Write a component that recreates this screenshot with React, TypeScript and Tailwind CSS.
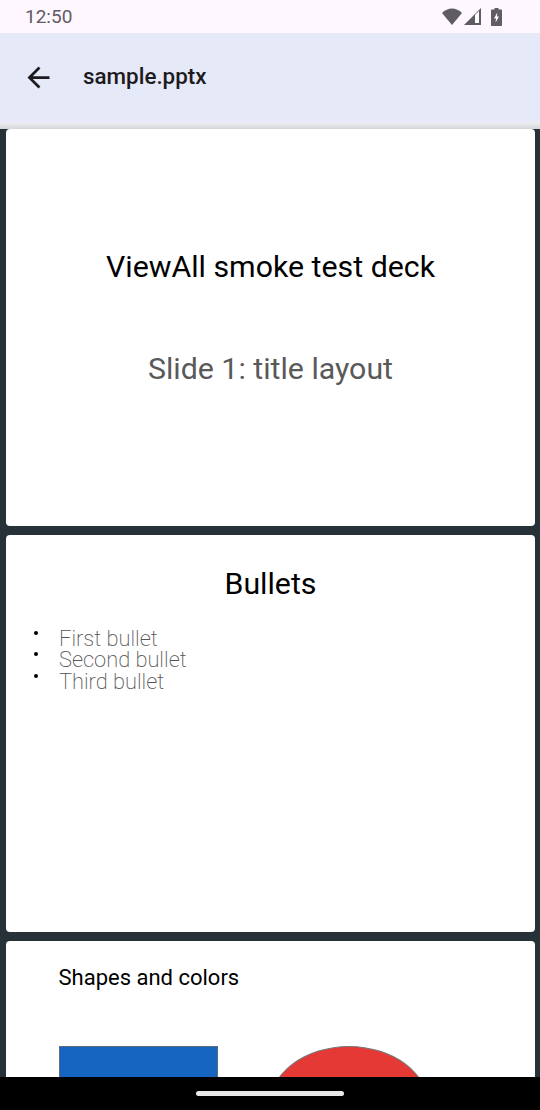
const BULLETS = ['First bullet', 'Second bullet', 'Third bullet']

function StatusIcons() {
  return (
    <div className="flex items-center">
      <svg width="20" height="17" viewBox="0 0 20 17" className="fill-[#5f5c63]">
        <path d="M0 5 C5.5 -1 14.5 -1 20 5 L10 17 Z" />
      </svg>
      <svg width="17" height="17" viewBox="0 0 17 17" className="ml-[2px]">
        <path d="M0 17 L17 0 V17 Z" fill="#5f5c63" />
        <path d="M11 7 L15 3 V15 H11 Z" fill="#fff" />
      </svg>
      <svg width="11" height="18" viewBox="0 0 11 18" className="ml-[10px] fill-[#5f5c63]">
        <path d="M3.5 0 H7.5 V1.5 H10 C10.6 1.5 11 1.9 11 2.5 V17 C11 17.6 10.6 18 10 18 H1 C0.4 18 0 17.6 0 17 V2.5 C0 1.9 0.4 1.5 1 1.5 H3.5 Z" />
        <path d="M6.3 4.5 L3 10.5 H5 L4.6 14.5 L8 8.5 H6 Z" fill="#fef7ff" />
      </svg>
    </div>
  )
}

export default function App() {
  return (
    <div className="w-[540px] h-[1110px] flex flex-col overflow-hidden bg-[#263238] font-['Roboto',sans-serif]">
      {/* Status bar */}
      <div className="h-[33px] shrink-0 bg-[#fef7ff] flex items-center justify-between pl-[25px] pr-[38px]">
        <span className="text-[19px] leading-none text-[#5f5c63]">12:50</span>
        <StatusIcons />
      </div>

      {/* App bar */}
      <div className="h-[88.5px] shrink-0 bg-[#e6e9f8] flex items-center pl-[22px]">
        <svg width="33" height="33" viewBox="0 0 24 24" className="fill-[#1d1b20]">
          <path d="M20 11H7.83l5.59-5.59L12 4l-8 8 8 8 1.41-1.41L7.83 13H20v-2z" />
        </svg>
        <span className="ml-[28px] text-[22.4px] font-[470] text-[#1d1b20]">sample.pptx</span>
      </div>
      <div className="h-[7.5px] shrink-0 bg-gradient-to-b from-[#eff0f4] to-[#d3d6d9]" />

      {/* Slides */}
      <div className="flex-1 min-h-0 overflow-hidden pl-[6px] pr-[5px] flex flex-col gap-[9.5px]">
        <div className="h-[396.5px] shrink-0 bg-white rounded-[4px] flex flex-col items-center pt-[117.5px]">
          <h1 className="text-[30.3px] leading-[40px] text-black">ViewAll smoke test deck</h1>
          <p className="mt-[62px] text-[30.3px] leading-[40px] text-[#595959]">Slide 1: title layout</p>
        </div>

        <div className="h-[396.5px] shrink-0 bg-white rounded-[4px] pt-[28.5px]">
          <h2 className="text-[30.3px] leading-[40px] text-black text-center">Bullets</h2>
          <ul className="mt-[23px] pl-[28px]">
            {BULLETS.map((b) => (
              <li key={b} className="flex h-[21.5px] items-start">
                <span className="mt-[4px] w-[4px] h-[4px] rounded-full bg-black shrink-0" />
                <span className="ml-[21px] mt-[1px] text-[21.8px] leading-[21.5px] font-[200] text-[#555]">{b}</span>
              </li>
            ))}
          </ul>
        </div>

        <div className="h-[396.5px] shrink-0 bg-white rounded-[4px] pt-[22.5px] pl-[52.5px]">
          <h2 className="text-[22px] leading-[28px] text-black">Shapes and colors</h2>
          <div className="mt-[54.5px] flex items-start">
            <div className="w-[159.5px] h-[120px] bg-[#1565c0] border border-[#5f6b7a]" />
            <div className="ml-[51px] w-[160px] h-[120px] rounded-[50%] bg-[#e53935] border border-[#777]" />
          </div>
        </div>
      </div>

      {/* Nav bar */}
      <div className="h-[33px] shrink-0 bg-black flex items-center justify-center">
        <div className="w-[148px] h-[5px] rounded-full bg-[#e8e8e8]" />
      </div>
    </div>
  )
}
